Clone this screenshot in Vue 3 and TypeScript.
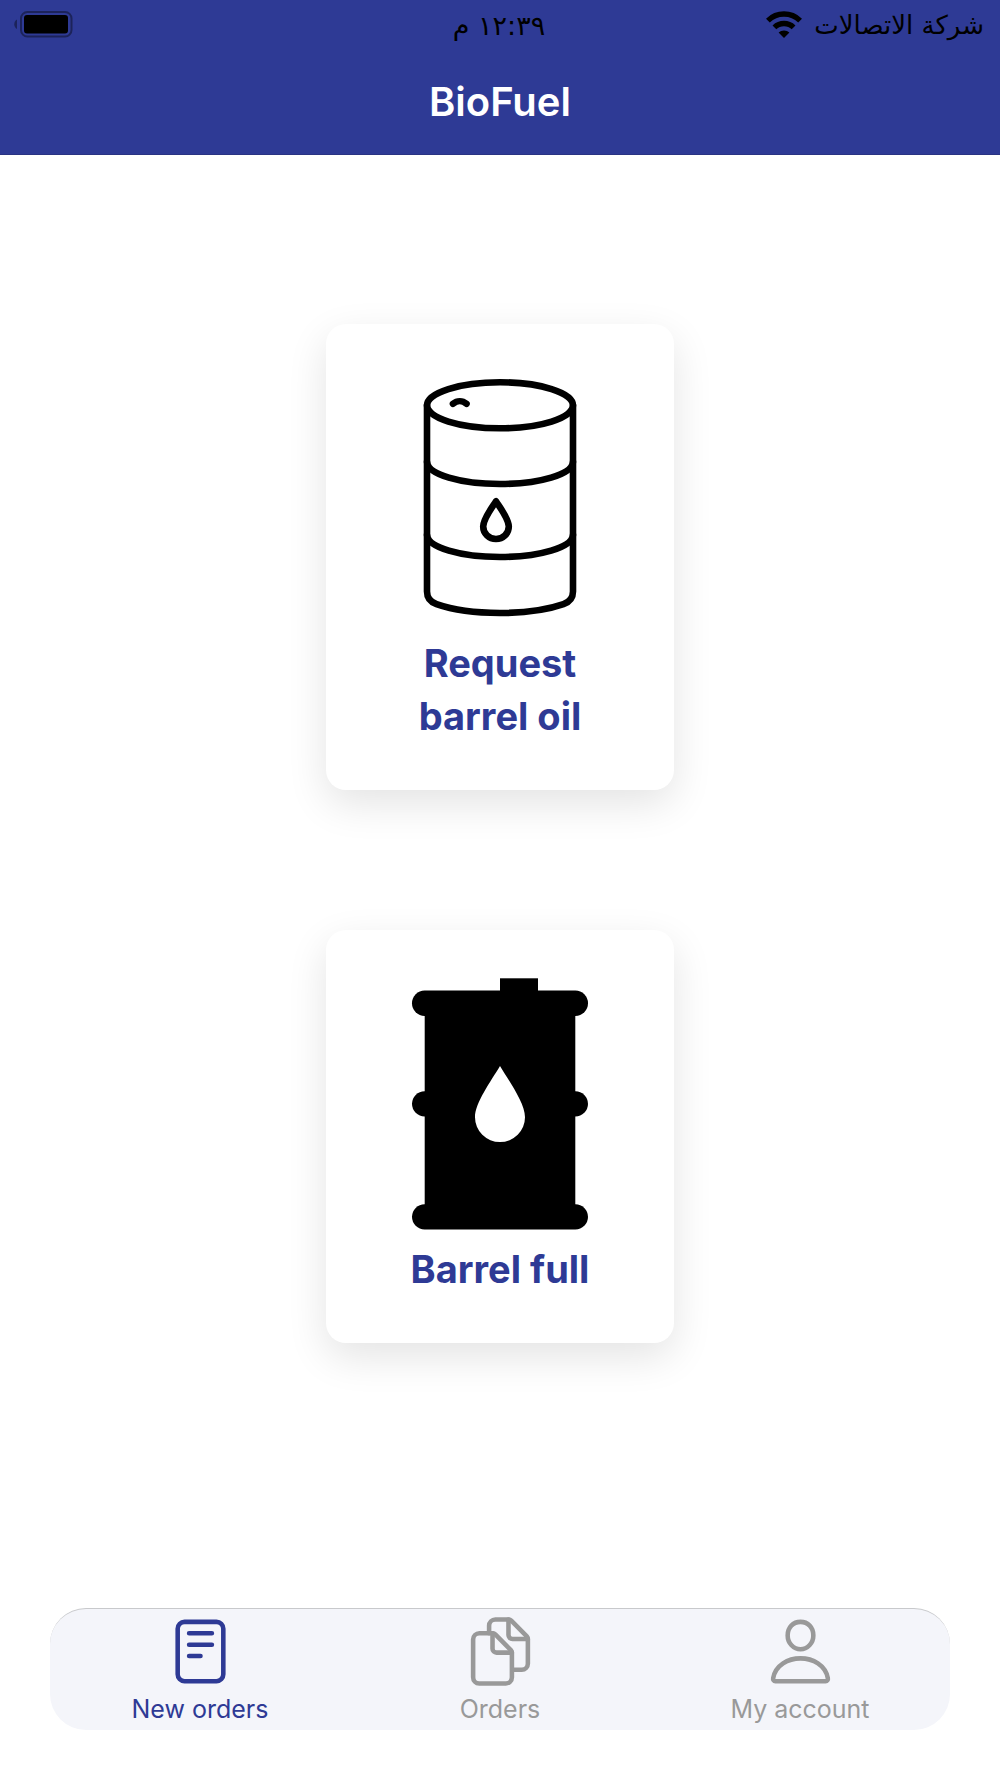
<script setup lang="ts">
import { ref } from 'vue'

type TabId = 'new' | 'orders' | 'account'

interface Tab {
  id: TabId
  label: string
  paths: string[]
}

const tabs: Tab[] = [
  {
    id: 'new',
    label: 'New orders',
    paths: [
      'M144 48H368a48 48 0 0 1 48 48V416a48 48 0 0 1-48 48H144a48 48 0 0 1-48-48V96a48 48 0 0 1 48-48z',
      'M176 128h160M176 208h160M176 288h80',
    ],
  },
  {
    id: 'orders',
    label: 'Orders',
    paths: [
      'M336 264.13V436c0 24.3-19.05 44-42.95 44H107c-23.95 0-43-19.7-43-44V172a44.26 44.26 0 0 1 44-44h94.12a24.55 24.55 0 0 1 17.49 7.36l109.15 111a25.4 25.4 0 0 1 7.24 17.77z',
      'M200 128v108a28.34 28.34 0 0 0 28 28h108',
      'M176 128V76a44.26 44.26 0 0 1 44-44h94a24.83 24.83 0 0 1 17.61 7.36l109.15 111A25.09 25.09 0 0 1 448 168v172c0 24.3-19.05 44-42.95 44H344',
      'M312 32v108a28.34 28.34 0 0 0 28 28h108',
    ],
  },
  {
    id: 'account',
    label: 'My account',
    paths: [
      'M256 240c-48 0-90-43-90-97 0-56 38-95 90-95s90 39 90 95c0 54-42 97-90 97z',
      'M256 304c-87 0-175.3 48-191.64 138.6C62.39 453.52 68.57 464 80 464h352c11.44 0 17.62-10.48 15.65-21.4C431.3 352 343 304 256 304z',
    ],
  },
]

const active = ref<TabId>('new')
</script>

<template>
  <div class="app">
    <header class="header">
      <div class="status" dir="rtl" lang="ar">
        <div class="carrier">
          <span class="status-text">شركة الاتصالات</span>
          <svg class="wifi" viewBox="0 0 36 27" aria-hidden="true">
            <g fill="none" stroke="#000" stroke-width="5.4">
              <path d="M1.9 9.6a23 23 0 0 1 32.2 0" />
              <path d="M8.4 16.4a13.8 13.8 0 0 1 19.2 0" />
            </g>
            <path d="M18 27l-5.4-5.4a7.8 7.8 0 0 1 10.8 0z" />
          </svg>
        </div>
        <time class="status-text clock">١٢:٣٩ م</time>
        <svg class="battery" viewBox="0 0 60 28" aria-hidden="true">
          <path d="M3 9.5v9.5a5.5 5.5 0 0 1 0-9.5z" fill="#1c235a" />
          <rect x="7" y="2" width="50.5" height="24.5" rx="6.5" fill="none" stroke="#1c235a" stroke-width="2" />
          <rect x="10" y="5" width="44" height="18.5" rx="3" />
        </svg>
      </div>
      <h1 class="title">BioFuel</h1>
    </header>

    <main class="main">
      <button class="card" type="button">
        <svg class="picture" viewBox="0 0 252 252" aria-hidden="true">
          <g fill="none" stroke="#000" stroke-width="6.6" stroke-linecap="round" stroke-linejoin="round">
            <ellipse cx="126" cy="33.3" rx="73" ry="23" />
            <path d="M53 33.3V219.5C53 225.5 56.5 230 62.5 232.2C79 238 101 241 126 241S173 238 189.5 232.2C195.5 230 199 225.5 199 219.5V33.3" />
            <path d="M53 90C54 102.5 86 112 126 112S198 102.5 199 90" />
            <path d="M53 163C54 175.5 86 185 126 185S198 175.5 199 163" />
            <path d="M79 31.8C83 28.4 88.500 28.4 92.500 31.800" />
            <path d="M122 129.3C117 137 109.2 147 109.2 154.500a12.8 12.5 0 0 0 25.6 0C134.8 147 127 137 122 129.3z" />
          </g>
        </svg>
        <span class="caption">Request<br />barrel oil</span>
      </button>

      <button class="card" type="button">
        <svg class="picture" viewBox="0 0 252 252" aria-hidden="true">
          <rect x="126" y="0.3" width="38" height="20" />
          <rect x="50.7" y="20" width="150.6" height="220" />
          <rect x="38" y="12.6" width="176" height="25.3" rx="12.65" />
          <rect x="38" y="113.2" width="176" height="25.3" rx="12.65" />
          <rect x="38" y="226.2" width="176" height="25.3" rx="12.65" />
          <path d="M126 88C117 103 101 125 101 139.3a25 24.8 0 0 0 50 0C151 125 135 103 126 88z" fill="#fff" />
        </svg>
        <span class="caption">Barrel full</span>
      </button>
    </main>

    <nav class="tabs">
      <button
        v-for="tab in tabs"
        :key="tab.id"
        type="button"
        class="tab"
        :class="{ active: tab.id === active }"
        @click="active = tab.id"
      >
        <svg class="tab-icon" viewBox="0 0 512 512" aria-hidden="true">
          <path v-for="d in tab.paths" :key="d" :d="d" />
        </svg>
        <span>{{ tab.label }}</span>
      </button>
    </nav>
  </div>
</template>

<style>
body {
  margin: 0;
  background: #fff;
}
</style>

<style scoped>
.app {
  display: flex;
  flex-direction: column;
  min-height: 100vh;
  font-family: Inter, "Liberation Sans", sans-serif;
}

.header {
  background: #2e3a95;
  border-bottom: 1px solid #2a3383;
}

.status {
  display: grid;
  grid-template-columns: 1fr auto 1fr;
  align-items: center;
  height: 48px;
  padding: 0 16px 0 14px;
  color: #000;
  font-family: "DejaVu Sans", sans-serif;
  font-size: 26px;
}

.status-text {
  padding-top: 2px;
}

.clock {
  font-size: 27px;
}

.carrier {
  display: flex;
  align-items: center;
  gap: 12px;
}

.wifi {
  width: 36px;
  height: 27px;
}

.battery {
  justify-self: end;
  width: 60px;
  height: 28px;
}

.title {
  margin: 0;
  padding: 30px 0 28px;
  color: #fff;
  font-size: 40px;
  font-weight: 600;
  line-height: 48px;
  text-align: center;
}

.main {
  flex: 1;
  display: flex;
  flex-direction: column;
  align-items: center;
  gap: 140px;
  padding: 169px 24px 48px;
}

.card {
  display: flex;
  flex-direction: column;
  align-items: center;
  gap: 13px;
  padding: 48px 48px 47px;
  border: 0;
  border-radius: 20px;
  background: #fff;
  box-shadow: 0 14px 40px rgba(0, 0, 0, 0.11);
  font-family: inherit;
  cursor: pointer;
}

.picture {
  width: 252px;
  height: 252px;
}

.caption {
  color: #2e3a95;
  font-size: 38px;
  font-weight: 700;
  line-height: 53px;
}

.tabs {
  display: grid;
  grid-template-columns: repeat(3, 1fr);
  margin: 0 50px 48px;
  border-top: 1px solid #c8c9cc;
  border-radius: 36px;
  background: #f4f5fa;
}

.tab {
  display: flex;
  flex-direction: column;
  align-items: center;
  gap: 6px;
  padding: 6px 0;
  border: 0;
  background: none;
  color: #999;
  font-family: inherit;
  font-size: 25px;
  font-weight: 400;
  line-height: 30px;
  cursor: pointer;
}

.tab.active {
  color: #2e3a95;
}

.tab-icon {
  width: 73px;
  height: 73px;
  fill: none;
  stroke: currentColor;
  stroke-width: 32;
  stroke-linecap: round;
  stroke-linejoin: round;
}
</style>
